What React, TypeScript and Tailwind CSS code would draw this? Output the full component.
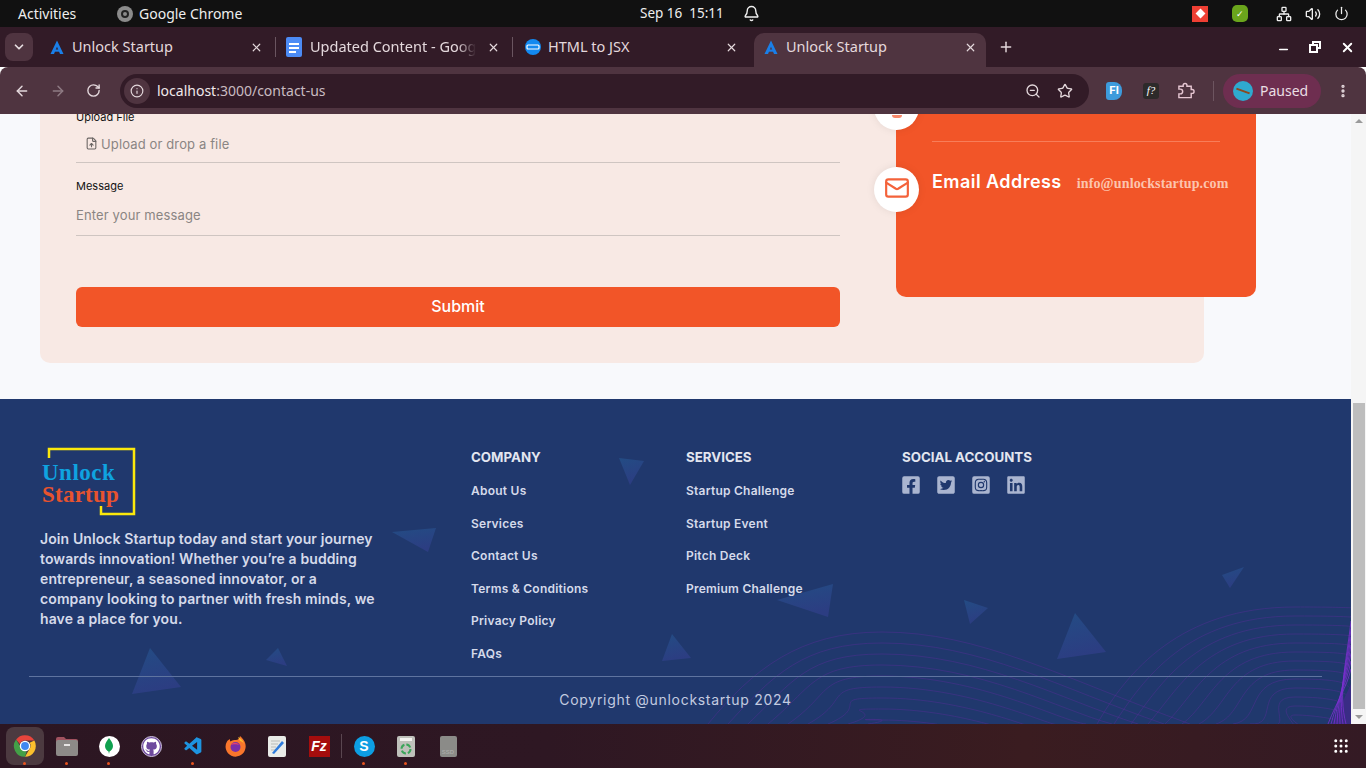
import React from "react";
import { FaFacebookSquare, FaTwitterSquare, FaGithub, FaInstagramSquare, FaLinkedin } from "react-icons/fa";
import { VscVscode } from "react-icons/vsc";
import { ArrowLeft, ArrowRight, RotateCw, Info, ZoomOut, Star, X, Plus, ChevronDown, MoreVertical, Minus, Bell, Network, Volume2, Power, FileUp, Mail, Grip } from "lucide-react";

const Fav = () => <svg width="14" height="15" viewBox="0 0 14 15"><path d="M7 0.500 L0.500 14 H4 L7 6.800 L10 14 H13.500 Z" fill="#1a7fe8" /><path d="M4.500 9.500h5v2.200h-5z" fill="#1a7fe8" /></svg>;
const Docs = () => <svg width="16" height="20" viewBox="0 0 16 20"><rect width="16" height="20" rx="2" fill="#4c8bf5" /><path d="M3 6h10v2H3zM3 10h10v2H3zM3 14h7v2H3z" fill="#fff" /></svg>;
const Jsx = () => <svg width="16" height="16" viewBox="0 0 16 16"><circle cx="8" cy="8" r="8" fill="#1389f0" /><rect x="2" y="6" width="12" height="4" rx="1" fill="none" stroke="#fff" strokeWidth="1.2" /></svg>;

function Tab({ icon, title, active, sep, cls, fade }: { icon: React.ReactNode; title: string; active?: boolean; sep?: boolean; cls: string; fade?: boolean }) {
  return (
    <div className={active ? `flex items-center h-[34px] self-end rounded-t-[10px] bg-[#4f3440] pb-[6px] ${cls}` : `flex items-center h-[34px] self-end pb-[6px] ${cls}`}>
      <div className="w-[20px] flex items-center justify-start shrink-0">{icon}</div>
      <span className={fade ? "ml-[2px] flex-1 whitespace-nowrap overflow-hidden text-[14.5px] text-[#e4d8dc] font-['Noto_Sans'] [mask-image:linear-gradient(90deg,#000_85%,transparent_96%)]" : "ml-[2px] flex-1 whitespace-nowrap overflow-hidden text-[14.5px] text-[#e4d8dc] font-['Noto_Sans']"}>{title}</span>
      <X size={13} strokeWidth={2.2} className="text-[#e4d8dc] ml-1 shrink-0" />
      {sep && <div className="w-px h-[20px] bg-[#6a5560] ml-[12px] -mr-[9px] shrink-0" />}
    </div>
  );
}

const ChromeIcon = ({ s = 26 }: { s?: number }) => (
  <svg width={s} height={s} viewBox="0 0 48 48">
    <path d="M24 4a20 20 0 0 1 17.3 10H24a10 10 0 0 0-9.3 6.3L7.600 11.900A20 20 0 0 1 24 4z" fill="#e8453c" />
    <path d="M41.300 14A20 20 0 0 1 24 44l8.600-15A10 10 0 0 0 32.600 18z" fill="#fbc02d" />
    <path d="M24 44A20 20 0 0 1 7.600 11.900L16 26.500A10 10 0 0 0 27 33.500z" fill="#43a047" />
    <circle cx="24" cy="24" r="8.500" fill="#3f88f0" stroke="#fff" strokeWidth="2.500" />
  </svg>
);

const Files = () => <svg width="22" height="20" viewBox="0 0 22 20"><path d="M0 3a2 2 0 0 1 2-2h6l2 2h10a2 2 0 0 1 2 2v3H0z" fill="#a0525f" /><rect y="4" width="22" height="16" rx="2" fill="#8d8a88" /><rect x="8" y="8" width="6" height="2" fill="#e6e4e3" /></svg>;
const Mongo = () => <div className="w-[21px] h-[21px] rounded-full bg-white flex items-center justify-center"><svg width="8" height="16" viewBox="0 0 8 16"><path d="M4 0C6 3 8 5 8 8s-2 4.500-3.500 5.500L4 16l-.5-2.500C2 12.500 0 11 0 8s2-5 4-8z" fill="#10a14f" /></svg></div>;
const Git = () => <div className="w-[21px] h-[21px] rounded-full bg-[#6e4a9e] border border-[#cfc4dd] flex items-center justify-center"><FaGithub size={17} className="text-white" /></div>;
const Gedit = () => <svg width="18" height="21" viewBox="0 0 18 21"><rect width="18" height="21" rx="2" fill="#e9ebe8" /><path d="M3 5h9M3 8h7M3 11h5M3 14h4" stroke="#b9bdb9" /><path d="M4 17 L14 5 L16 7 L6 18 Z" fill="#2d7bdc" /></svg>;
const Trash = () => <svg width="18" height="21" viewBox="0 0 18 21"><rect width="18" height="21" rx="2" fill="#bfc1bb" /><rect x="3" y="2" width="12" height="3" fill="#f2f2ef" /><circle cx="9" cy="13" r="4.500" fill="none" stroke="#3ba55a" strokeWidth="2" strokeDasharray="5 2" /></svg>;
const Ssd = () => <div className="w-[17px] h-[21px] rounded-[2px] bg-[#8b8b88] flex items-end justify-center text-[6px] leading-[9px] font-bold text-[#a9a9a6] font-['Liberation_Sans']">SSD</div>;
const Firefox = () => (
  <svg width="21" height="21" viewBox="0 0 21 21">
    <path d="M15 0c2 2 3 3 4.500 5.500 1.500 3 1.500 6 .5 8.500a10 10 0 1 1-18-8.500C3 4 4 3.500 5 3c-.2 1 0 2 .5 2.500C7 4 9 4 11 4c2 0 3.500-1.500 4-4z" fill="#f9762c" />
    <path d="M13 1c2 1 5 3 6 7-1-2-3-3-4-3-.5-1.500-1.500-2.500-2-4z" fill="#fbc02d" />
    <circle cx="10.500" cy="11" r="5" fill="#7a2ea8" />
    <path d="M6 9c2-3 6-3 8 0-2-1-6-1-8 0z" fill="#e8436a" />
  </svg>
);
const Skype = () => <div className="w-[21px] h-[21px] rounded-full bg-[#0d9ee3] text-white font-bold text-[14px] leading-none flex items-center justify-center font-['Liberation_Sans']">S</div>;
const Fz = () => <div className="w-[21px] h-[21px] bg-[#a50d0d] flex items-center justify-center text-white font-bold italic text-[14px] leading-none font-['Liberation_Sans']">Fz</div>;

const dock: { i: React.ReactNode; dot?: boolean }[] = [
  { i: <ChromeIcon />, dot: true },
  { i: <Files />, dot: true },
  { i: <Mongo />, dot: true },
  { i: <Git /> },
  { i: <VscVscode size={21} className="text-[#1d94e0]" />, dot: true },
  { i: <Firefox /> },
  { i: <Gedit /> },
  { i: <Fz /> },
];
const dock2: { i: React.ReactNode; dot?: boolean }[] = [
  { i: <Skype />, dot: true },
  { i: <Trash />, dot: true },
  { i: <Ssd /> },
];
const DockItem = ({ d, active }: { d: { i: React.ReactNode; dot?: boolean }; active?: boolean }) => (
  <div className={active ? "relative w-[38px] h-[38px] mx-[2px] rounded-[8px] bg-[#4c3a40] flex items-center justify-center" : "relative w-[38px] h-[38px] mx-[2px] rounded-[8px] flex items-center justify-center"}>
    {d.i}
    {d.dot && <span className="absolute left-[17px] bottom-0 w-[3px] h-[3px] rounded-full bg-[#e9541f]" />}
  </div>
);

const FootLink = ({ t }: { t: string }) => <div className="h-[32.5px] text-[12px] leading-[16px] font-semibold text-[#d5daea] tracking-[0.02em] whitespace-nowrap">{t}</div>;

const tris: { l: number; t: number; pts: string }[] = [
  { l: 392, t: 129, pts: "0,4 44,0 36,24" },
  { l: 619, t: 59, pts: "0,0 25,3 11,27" },
  { l: 132, t: 249, pts: "18,0 49,39 0,46" },
  { l: 266, t: 249, pts: "12,0 0,12 21,18" },
  { l: 662, t: 235, pts: "10,0 29,24 0,27" },
  { l: 777, t: 185, pts: "0,16 56,0 51,33" },
  { l: 964, t: 201, pts: "0,0 24,8 6,24" },
  { l: 1057, t: 214, pts: "18,0 49,39 0,46" },
  { l: 1222, t: 168, pts: "0,8 22,0 8,21" },
];

const waveA = Array.from({ length: 9 }, (_, k) => {
  const top = 233 + k * 11;
  const s = 708 + k * 20;
  return `M${s} 325 C ${s + 45} ${270 + k * 6}, ${800 + k * 4} ${top}, 882 ${top} C 980 ${top}, 1060 ${top + 45}, ${1190 - k * 26} 325`;
});
const waveB = Array.from({ length: 13 }, (_, k) => {
  const top = 208 + k * 9;
  const s = 1097 + k * 17;
  return `M${s} 325 C ${s + 30} ${top + 65 - k * 3}, ${1180 + k * 8} ${top}, 1295 ${top} S 1345 ${top + 5}, 1351 ${top + 10}`;
});
const waveD = Array.from({ length: 7 }, (_, k) => `M${1328 + k * 3} 325 C 1338 ${300 - k}, 1346 ${290 - k * 4}, 1351 ${270 - k * 8}`);

export default function App() {
  return (
    <div className="w-[1366px] h-[768px] overflow-hidden flex flex-col font-['Inter',sans-serif] bg-white">
      {/* system bar */}
      <div className="h-[27px] shrink-0 bg-[#111111] flex items-center text-[#eeeeee] text-[14px] font-['Noto_Sans'] relative">
        <span className="ml-[18px] w-[99px]">Activities</span>
        <div className="w-[16px] h-[16px] rounded-full bg-[#8b8b8b] flex items-center justify-center"><div className="w-[8px] h-[8px] rounded-full border-2 border-[#222]" /></div>
        <span className="ml-[6px]">Google Chrome</span>
        <div className="absolute left-[640px] flex items-center">
          <span className="text-[13.5px] whitespace-pre">Sep 16  15:11</span>
          <Bell size={17} className="ml-[19px]" />
        </div>
        <div className="ml-auto flex items-center">
          <div className="w-[16px] h-[16px] bg-[#ee3f33] flex items-center justify-center"><div className="w-[7px] h-[7px] bg-white rotate-45" /></div>
          <div className="ml-[24px] w-[16px] h-[17px] rounded-[5px] bg-[#6aa51c] flex items-center justify-center text-[9px] text-white leading-none">✓</div>
          <Network size={16} className="ml-[28px]" />
          <Volume2 size={16} className="ml-[13px]" />
          <Power size={15} className="ml-[13px] mr-[17px]" />
        </div>
      </div>
      {/* tabs */}
      <div className="h-[40px] shrink-0 bg-[#321b27] flex items-center relative">
        <div className="ml-[5px] w-[28px] h-[28px] rounded-[8px] bg-[#4f3440] flex items-center justify-center mt-[-1px]"><ChevronDown size={14} strokeWidth={3} className="text-[#e6dde0]" /></div>
        <div className="flex ml-[7px] self-stretch">
          <Tab icon={<Fav />} title="Unlock Startup" cls="w-[236px] pl-[10px] pr-[9px]" sep />
          <Tab icon={<Docs />} title="Updated Content - Google Docs" cls="w-[237px] pl-[10px] pr-[9px] [&>div:first-child]:w-[22px]" sep fade />
          <Tab icon={<Jsx />} title="HTML to JSX" cls="w-[241px] pl-[12px] pr-[16px] [&>div:first-child]:w-[21px]" />
          <Tab icon={<Fav />} title="Unlock Startup" cls="w-[232px] pl-[10px] pr-[9px]" active />
        </div>
        <Plus size={16} strokeWidth={2.2} className="ml-[12px] text-[#e4d8dc]" />
        <div className="ml-auto flex items-center text-white">
          <Minus size={13} strokeWidth={3} className="mt-[4px]" />
          <svg width="12" height="12" viewBox="0 0 12 12" className="ml-[19px]"><path d="M3 0h9v8h-3v4H0V3h3z" fill="#fff" /><path d="M5 2h5v4H9V3H5z" fill="#321b27" /><rect x="2" y="5" width="5" height="5" fill="#321b27" /></svg>
          <X size={15} strokeWidth={3} className="ml-[19px] mr-[11px]" />
        </div>
      </div>
      {/* toolbar */}
      <div className="h-[47px] shrink-0 bg-[#4f3440] rounded-t-[8px] flex items-center text-[#e4d8dc]">
        <ArrowLeft size={16} className="ml-[14px]" strokeWidth={2.2} />
        <ArrowRight size={16} className="ml-[20px] text-[#8f7b84]" strokeWidth={2.2} />
        <RotateCw size={15} className="ml-[20px]" strokeWidth={2.2} />
        <div className="ml-[19px] w-[969px] h-[34px] rounded-full bg-[#321b27] flex items-center">
          <div className="ml-[4px] w-[26px] h-[26px] rounded-full bg-[#4f3440] flex items-center justify-center"><Info size={14} /></div>
          <span className="ml-[7px] -mt-[1px] text-[14px] font-['Noto_Sans'] text-[#f0e8eb]">localhost<span className="text-[#c9bbc1]">:3000/contact-us</span></span>
          <ZoomOut size={16} className="ml-auto" />
          <Star size={16} className="ml-[16px] mr-[16px]" />
        </div>
        <div className="ml-[17px] w-[16px] h-[18px] rounded-l-[3px] rounded-r-[8px] bg-[#3d9bdc] text-white text-[11px] font-bold flex items-center justify-center">FI</div>
        <div className="ml-[21px] w-[16px] h-[16px] rounded-[3px] bg-[#2d2a2a] text-white text-[11px] italic font-['Liberation_Serif'] flex items-center justify-center">f?</div>
        <svg width="18" height="18" viewBox="0 0 19 18" fill="none" stroke="#e6c6d2" strokeWidth="1.500" className="ml-[18px]"><path d="M2 4h4.500V3a2 2 0 0 1 4 0v1H15v3.500h1a2 2 0 0 1 0 4h-1V16H2v-4h1.500a2.500 2.500 0 0 0 0-5H2z" /></svg>
        <div className="ml-[18px] w-px h-[20px] bg-[#6d5560]" />
        <div className="ml-[9px] w-[98px] h-[34px] rounded-full bg-[#6e2e50] flex items-center">
          <div className="ml-[10px] w-[20px] h-[20px] rounded-full bg-[#2fa9cf] flex items-center justify-center"><div className="w-[14px] h-[2px] bg-[#8a4a20] rotate-[20deg]" /></div>
          <span className="ml-[7px] -mt-[1px] text-[14px] font-['Noto_Sans'] text-[#eadfe4]">Paused</span>
        </div>
        <MoreVertical size={16} strokeWidth={3} className="ml-[14px]" />
      </div>
      {/* viewport */}
      <div className="h-[610px] shrink-0 flex overflow-hidden">
        <div className="w-[1351px] shrink-0 flex flex-col bg-[#f8f9fc]">
          {/* contact section */}
          <div className="h-[285px] shrink-0 pl-[40px] overflow-hidden">
            <div className="w-[1164px] h-[249px] bg-[#f8e9e4] rounded-b-[10px] flex">
              <div className="w-[800px] pl-[36px] shrink-0 text-[#111]">
                <div className="text-[11px] leading-[14px] mt-[-4px] h-[14px]">Upload File</div>
                <div className="h-[30px] mt-[9px] border-b border-[#cfc5c1] flex items-start pl-[9px] pt-[1px] text-[#8a8583] text-[13px] leading-[20px] tracking-[0.01em]">
                  <FileUp size={13} className="mt-[3px] mr-[3px] text-[#6b6664]" />Upload or drop a file
                </div>
                <div className="text-[11px] leading-[14px] mt-[16px] h-[14px]">Message</div>
                <div className="h-[37px] mt-[6px] border-b border-[#cfc5c1] text-[#8a8583] text-[13px] leading-[20px] pt-[6px] tracking-[0.01em]">Enter your message</div>
                <button className="block mt-[51px] w-[764px] h-[40px] rounded-[6px] bg-[#f25528] text-white text-[16px] font-medium pb-[3px]">Submit</button>
              </div>
              <div className="relative ml-[56px] w-[360px] h-[183px] shrink-0 bg-[#f25528] rounded-b-[10px] pl-[36px]">
                <div className="absolute left-[-22px] top-[-29px] w-[45px] h-[45px] rounded-full bg-white shadow-[0_0_8px_rgba(0,0,0,0.08)] flex items-end justify-center"><div className="w-[10px] h-[3px] mb-[12px] rounded-b-full bg-[#f8886a]" /></div>
                <div className="h-[28px] w-[288px] border-b border-[#f87d59]" />
                <div className="absolute left-[-22px] top-[53px] w-[45px] h-[45px] rounded-full bg-white shadow-[0_0_8px_rgba(0,0,0,0.08)] flex items-center justify-center"><Mail size={26} className="text-[#f4623a] -mt-[3px]" /></div>
                <div className="flex items-baseline mt-[26px] whitespace-nowrap">
                  <span className="text-[18px] leading-[28px] font-semibold text-white tracking-[0.45px]">Email Address</span>
                  <span className="ml-[15px] text-[14px] font-bold font-['Liberation_Serif'] tracking-[0.14px] text-[#fcc4ae]">info@unlockstartup.com</span>
                </div>
              </div>
            </div>
          </div>
          {/* footer */}
          <div className="relative h-[325px] shrink-0 bg-[#20386d] overflow-hidden">
            <svg className="absolute inset-0" width="1351" height="325" viewBox="0 0 1351 325" fill="none">
              <defs>
                <linearGradient id="tg" x1="0" y1="0" x2="0.3" y2="1">
                  <stop offset="0" stopColor="#234c84" />
                  <stop offset="1" stopColor="#2c3d82" />
                </linearGradient>
              </defs>
              {tris.map((t, i) => (
                <polygon key={i} points={t.pts} transform={`translate(${t.l} ${t.t})`} fill="url(#tg)" />
              ))}
              {[...waveA, ...waveB].map((d, i) => <path key={i} d={d} stroke="#5a2a9c" strokeOpacity="0.42" strokeWidth="1" />)}
              <path d="M1332 325 L1351 285 V325 Z" fill="#3a2c85" />
              {waveD.map((d, i) => <path key={i} d={d} stroke="#7a2fd0" strokeOpacity="0.8" strokeWidth="1" />)}
            </svg>
            <div className="relative flex pt-[48px] pl-[40px] h-[277px]">
              <div className="w-[431px] shrink-0">
                <div className="relative w-[96px] h-[70px]">
                  <svg width="96" height="70" viewBox="0 0 96 70" fill="none" className="absolute left-0 top-0">
                    <path d="M9 11V2H94V67H61V59" stroke="#fbe80c" strokeWidth="2.500" />
                  </svg>
                  <div className="absolute left-[2px] top-[14px] font-['Liberation_Serif'] font-bold text-[23px] leading-[24px] tracking-[0.5px] text-[#0fa3e0]">Unlock</div>
                  <div className="absolute left-[2px] top-[36px] font-['Liberation_Serif'] font-bold text-[23px] leading-[24px] tracking-[0.01em] text-[#e8532e]">Startup</div>
                </div>
                <p className="mt-[12px] w-[337px] text-[14px] leading-[20px] font-semibold text-[#d5daea] tracking-[0.1px]">Join Unlock Startup today and start your journey towards innovation! Whether you’re a budding entrepreneur, a seasoned innovator, or a company looking to partner with fresh minds, we have a place for you.</p>
              </div>
              <div className="w-[215px] shrink-0">
                <div className="text-[13.3px] leading-[20px] font-bold text-[#e3e6f0] mb-[16px]">COMPANY</div>
                {["About Us", "Services", "Contact Us", "Terms & Conditions", "Privacy Policy", "FAQs"].map((t) => <FootLink key={t} t={t} />)}
              </div>
              <div className="w-[216px] shrink-0">
                <div className="text-[13.3px] leading-[20px] font-bold text-[#e3e6f0] mb-[16px]">SERVICES</div>
                {["Startup Challenge", "Startup Event", "Pitch Deck", "Premium Challenge"].map((t) => <FootLink key={t} t={t} />)}
              </div>
              <div>
                <div className="text-[13.3px] leading-[20px] font-bold text-[#e3e6f0] mb-[8px] whitespace-nowrap">SOCIAL ACCOUNTS</div>
                <div className="flex gap-[15px] -ml-[1px] text-[#aab5d0]">
                  <FaFacebookSquare size={20} />
                  <FaTwitterSquare size={20} />
                  <FaInstagramSquare size={20} />
                  <FaLinkedin size={20} />
                </div>
              </div>
            </div>
            <div className="relative mx-[29px] w-[1293px] border-t border-[#5f74a0] text-center text-[14px] leading-[20px] pt-[13px] text-[#c3cbe0] tracking-[0.05em]">Copyright @unlockstartup 2024</div>
          </div>
        </div>
        {/* scrollbar */}
        <div className="w-[15px] shrink-0 bg-[#f5f5f5] flex flex-col items-center">
          <div className="h-[289px] pt-[5px]"><div className="w-0 h-0 border-x-[4px] border-x-transparent border-b-[4px] border-b-[#9a9a9a]" /></div>
          <div className="w-[12px] h-[306px] bg-[#bdbdbd]" />
          <div className="mt-[6px] w-0 h-0 border-x-[4px] border-x-transparent border-t-[4px] border-t-[#9a9a9a]" />
        </div>
      </div>
      {/* dock */}
      <div className="h-[44px] shrink-0 flex items-center pl-[4px] bg-[linear-gradient(90deg,#2c1622,#2e1723_40%,#3a1c20_75%,#341a24)]">
        <DockItem d={dock[0]} active />
        {dock.slice(1).map((d, i) => <DockItem key={i} d={d} />)}
        <div className="w-px h-[24px] bg-[#5a4650] ml-[1px] mr-[1px]" />
        {dock2.map((d, i) => <DockItem key={i} d={d} />)}
        <Grip size={18} className="ml-auto mr-[16px] text-white" />
      </div>
    </div>
  );
}
